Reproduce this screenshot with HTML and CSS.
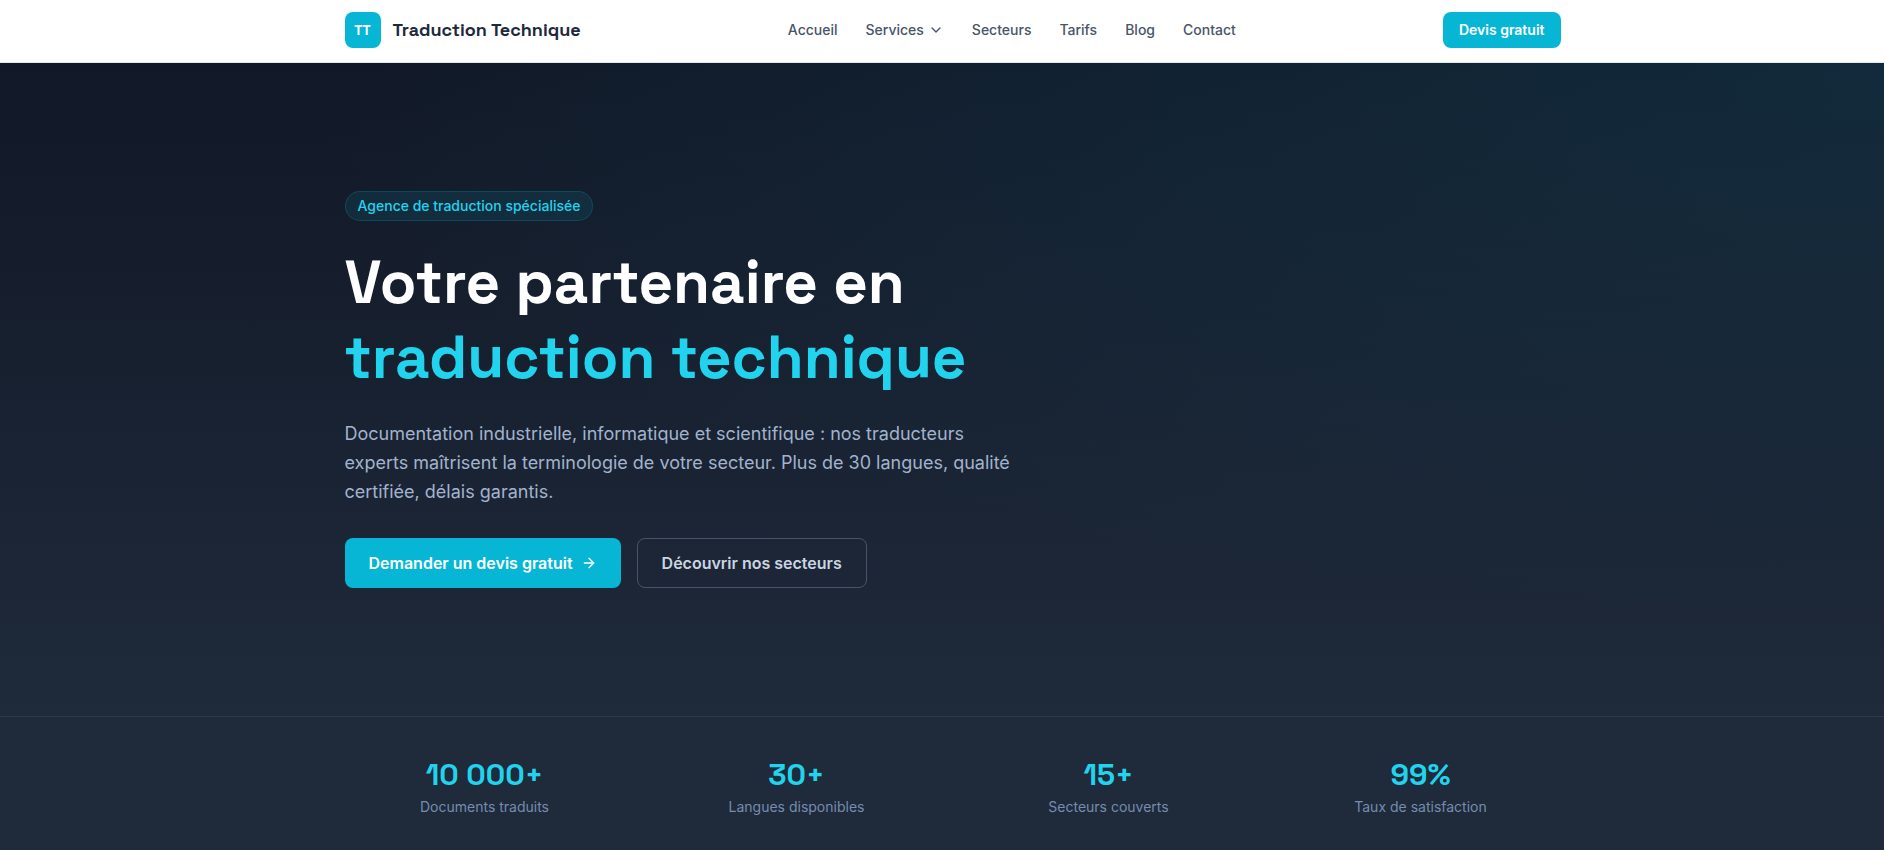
FILE: index.html
```html
<!DOCTYPE html>
<html lang="fr">
<head>
  <meta charset="UTF-8" />
  <meta name="viewport" content="width=device-width, initial-scale=1.0"/>
  <title>Traduction Technique</title>
  <link rel="stylesheet" href="styles.css">
</head>
<body>
  <header class="header">
    <div class="container header-inner">
      <a href="#" class="brand">
        <span class="brand-logo">TT</span>
        <span class="brand-name">Traduction Technique</span>
      </a>
      <nav class="nav">
        <a href="#">Accueil</a>
        <a href="#services" class="has-menu">Services
          <svg width="16" height="16" viewBox="0 0 24 24" fill="none" stroke="currentColor" stroke-width="2" stroke-linecap="round" stroke-linejoin="round" aria-hidden="true"><path d="m6 9 6 6 6-6"/></svg>
        </a>
        <a href="#secteurs">Secteurs</a>
        <a href="#tarifs">Tarifs</a>
        <a href="#blog">Blog</a>
        <a href="#contact">Contact</a>
      </nav>
      <a href="#devis" class="btn btn-small">Devis gratuit</a>
    </div>
  </header>

  <main>
    <section class="hero">
      <div class="container">
        <div class="hero-content">
          <span class="badge">Agence de traduction spécialisée</span>
          <h1>Votre partenaire en <span class="accent">traduction technique</span></h1>
          <p>Documentation industrielle, informatique et scientifique : nos traducteurs experts maîtrisent la terminologie de votre secteur. Plus de 30 langues, qualité certifiée, délais garantis.</p>
          <div class="hero-actions">
            <a href="#devis" class="btn">Demander un devis gratuit
              <svg width="16" height="16" viewBox="0 0 24 24" fill="none" stroke="currentColor" stroke-width="2" stroke-linecap="round" stroke-linejoin="round" aria-hidden="true"><path d="M5 12h14"/><path d="m12 5 7 7-7 7"/></svg>
            </a>
            <a href="#secteurs" class="btn btn-outline">Découvrir nos secteurs</a>
          </div>
        </div>
      </div>
    </section>

    <section class="stats">
      <div class="container stats-grid">
        <div class="stat">
          <div class="stat-value">10 000+</div>
          <div class="stat-label">Documents traduits</div>
        </div>
        <div class="stat">
          <div class="stat-value">30+</div>
          <div class="stat-label">Langues disponibles</div>
        </div>
        <div class="stat">
          <div class="stat-value">15+</div>
          <div class="stat-label">Secteurs couverts</div>
        </div>
        <div class="stat">
          <div class="stat-value">99%</div>
          <div class="stat-label">Taux de satisfaction</div>
        </div>
      </div>
    </section>
  </main>
</body>
</html>
```
FILE: styles.css
```css
:root {
  --cyan: #06b6d4;
  --cyan-light: #22d3ee;
  --dark: #111827;
  --slate: #1f2a3a;
  --heading: "Space Grotesk", Inter, sans-serif;
}

* {
  box-sizing: border-box;
}

body {
  margin: 0;
  font-family: Inter, sans-serif;
  background: var(--slate);
  color: #fff;
}

a {
  color: inherit;
  text-decoration: none;
}

.header,
.hero,
.stats {
  padding-left: 21px;
}

.container {
  max-width: 1280px;
  margin: 0 auto;
  padding: 0 32px;
}

.header {
  background: #fff;
  border-bottom: 1px solid #e2e8f0;
}

.header-inner {
  display: flex;
  justify-content: space-between;
  align-items: center;
  padding-top: 12px;
  padding-bottom: 14px;
}

.brand {
  display: flex;
  align-items: center;
  gap: 12px;
}

.brand-logo {
  display: flex;
  align-items: center;
  justify-content: center;
  width: 36px;
  height: 36px;
  border-radius: 8px;
  background: var(--cyan);
  font-family: var(--heading);
  font-size: 14px;
  font-weight: 700;
}

.brand-name {
  font-family: var(--heading);
  font-size: 18px;
  font-weight: 600;
  line-height: 28px;
  color: #1e293b;
}

.nav {
  display: flex;
  gap: 28px;
  font-size: 14px;
  font-weight: 500;
  line-height: 20px;
  color: #475569;
}

.has-menu {
  display: flex;
  align-items: center;
  gap: 4px;
}

.btn {
  display: inline-flex;
  align-items: center;
  gap: 8px;
  padding: 13px 24px;
  border-radius: 8px;
  background: var(--cyan);
  font-size: 16px;
  font-weight: 600;
  line-height: 24px;
  color: #fff;
}

.btn-small {
  padding: 8px 16px;
  font-size: 14px;
  line-height: 20px;
}

.btn-outline {
  padding: 12px 24px;
  border: 1px solid #475569;
  background: transparent;
  color: #cbd5e1;
}

.hero {
  padding-top: 128px;
  padding-bottom: 128px;
  background:
    radial-gradient(ellipse at top right, rgba(20, 160, 190, 0.13), transparent 60%),
    linear-gradient(to bottom, var(--dark), var(--slate));
}

.hero-content {
  max-width: 672px;
}

.badge {
  display: block;
  width: fit-content;
  padding: 4px 12px;
  border: 1px solid rgba(6, 182, 212, 0.2);
  border-radius: 15px;
  background: rgba(6, 182, 212, 0.1);
  font-size: 14px;
  font-weight: 500;
  line-height: 20px;
  color: var(--cyan-light);
}

h1 {
  margin: 24px 0;
  font-family: var(--heading);
  font-size: 60px;
  font-weight: 700;
  line-height: 75px;
}

.accent {
  display: block;
  color: var(--cyan-light);
}

.hero p {
  margin: 0 0 32px;
  font-size: 18px;
  line-height: 29px;
  color: #a2b3cd;
}

.hero-actions {
  display: flex;
  flex-wrap: wrap;
  gap: 16px;
}

.stats {
  padding-top: 40px;
  padding-bottom: 32px;
  border-top: 1px solid #2e3a4a;
  background: var(--slate);
}

.stats-grid {
  display: grid;
  grid-template-columns: repeat(4, 1fr);
  gap: 32px;
  text-align: center;
}

.stat-value {
  margin-bottom: 4px;
  font-family: var(--heading);
  font-size: 30px;
  font-weight: 700;
  line-height: 36px;
  color: var(--cyan-light);
}

.stat-label {
  font-size: 14px;
  line-height: 20px;
  color: #768cb0;
}
```
